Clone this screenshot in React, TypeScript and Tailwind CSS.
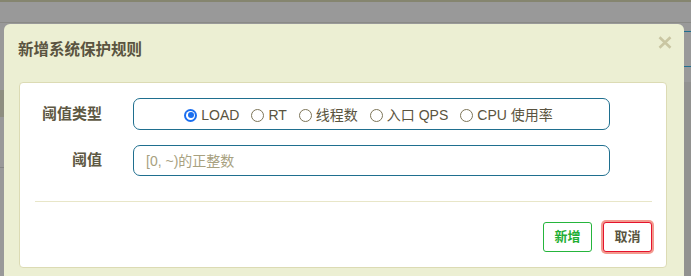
import React, { useState } from 'react';

const FONT = '"Liberation Sans", "Noto Sans CJK SC", sans-serif';

const options = ['LOAD', 'RT', '线程数', '入口 QPS', 'CPU 使用率'];

const Radio: React.FC<{ checked: boolean; label: string; onSelect: () => void }> = ({ checked, label, onSelect }) => (
  <label onClick={onSelect} className="flex items-center gap-[4px] cursor-pointer">
    {checked ? (
      <span className="w-[13px] h-[13px] rounded-full bg-[#1a6ef0] flex items-center justify-center">
        <span className="w-[9px] h-[9px] rounded-full bg-white flex items-center justify-center">
          <span className="w-[6px] h-[6px] rounded-full bg-[#1a6ef0]" />
        </span>
      </span>
    ) : (
      <span className="w-[13px] h-[13px] rounded-full border border-[#7d7558] bg-white" />
    )}
    <span>{label}</span>
  </label>
);

export default function App() {
  const [grade, setGrade] = useState(0);
  const [value, setValue] = useState('');

  return (
    <div className="relative w-[691px] h-[276px] overflow-hidden bg-[#999999]" style={{ fontFamily: FONT }}>
      {/* backdrop page bits */}
      <div className="absolute left-0 top-0 w-full h-[2px] bg-[#85856f]" />
      <div className="absolute left-0 top-[22px] w-full h-[1px] bg-[#8a8a86]" />
      <div className="absolute right-0 top-[31px] w-[7px] h-[1px] bg-[#1f6f8f]" />
      <div className="absolute right-0 top-[66px] w-[7px] h-[1px] bg-[#1f6f8f]" />
      <div className="absolute right-0 top-[82px] w-[7px] h-[200px] bg-[#929290]" />
      <div className="absolute left-0 top-[90px] w-[4px] h-[27px] bg-[#8e8e80]" />
      <div className="absolute left-0 top-[167px] w-[4px] h-[1px] bg-[#858585]" />

      {/* modal */}
      <div className="absolute left-[4px] top-[24px] w-[680px] h-[270px] bg-[#ecefd3] rounded-t-[6px] px-[15px]">
        <div className="relative h-[58px] pt-[17px]">
          <h3 className="text-[15.5px] leading-[18px] font-bold text-[#5a5440] -ml-px">新增系统保护规则</h3>
          <button className="absolute right-[-3px] top-[11px] w-[15px] h-[14px] flex items-center justify-center">
            <svg width="14" height="13" viewBox="0 0 14 13">
              <path d="M1.5 1.2 L12.5 11.8 M12.5 1.2 L1.5 11.8" stroke="#c9c6a2" strokeWidth="2.6" />
            </svg>
          </button>
        </div>

        <div className="w-[648px] h-[186px] bg-white border border-[#dcdbb4] rounded-[4px] pt-[15px]">
          <div className="flex items-center h-[32px]">
            <div className="w-[82px] text-right text-[15px] font-bold text-[#5e5843]">阈值类型</div>
            <div className="ml-[31px] w-[477px] h-[32px] border border-[#1f6f8f] rounded-[7px] flex items-center justify-center gap-[12px] pr-[6px] pt-[2px] text-[14px] text-[#5a5440]">
              {options.map((o, i) => (
                <Radio key={o} label={o} checked={grade === i} onSelect={() => setGrade(i)} />
              ))}
            </div>
          </div>
          <div className="flex items-center h-[31px] mt-[15px]">
            <div className="w-[82px] text-right text-[15px] font-bold text-[#5e5843]">阈值</div>
            <input
              value={value}
              onChange={e => setValue(e.target.value)}
              placeholder="[0, ~)的正整数"
              className="ml-[31px] w-[477px] h-[31px] border border-[#1f6f8f] rounded-[7px] px-[12px] text-[14px] text-[#5a5440] placeholder:text-[#a8a17f] outline-none"
              style={{ fontFamily: FONT }}
            />
          </div>
          <div className="mt-[25px] ml-[15px] mr-[14px] h-[1px] bg-[#e8e6c8]" />
          <div className="flex justify-end gap-[11px] mt-[20px] pr-[14px]">
            <button className="w-[49px] h-[30px] bg-white border border-[#25b53c] rounded-[3px] text-[13px] font-semibold text-[#1fae33]">新增</button>
            <button className="w-[49px] h-[30px] bg-white border border-[#e5132c] rounded-[3px] text-[13px] font-semibold text-[#5a5440] ring-2 ring-[#f39a8f]">取消</button>
          </div>
        </div>
      </div>
    </div>
  );
}
